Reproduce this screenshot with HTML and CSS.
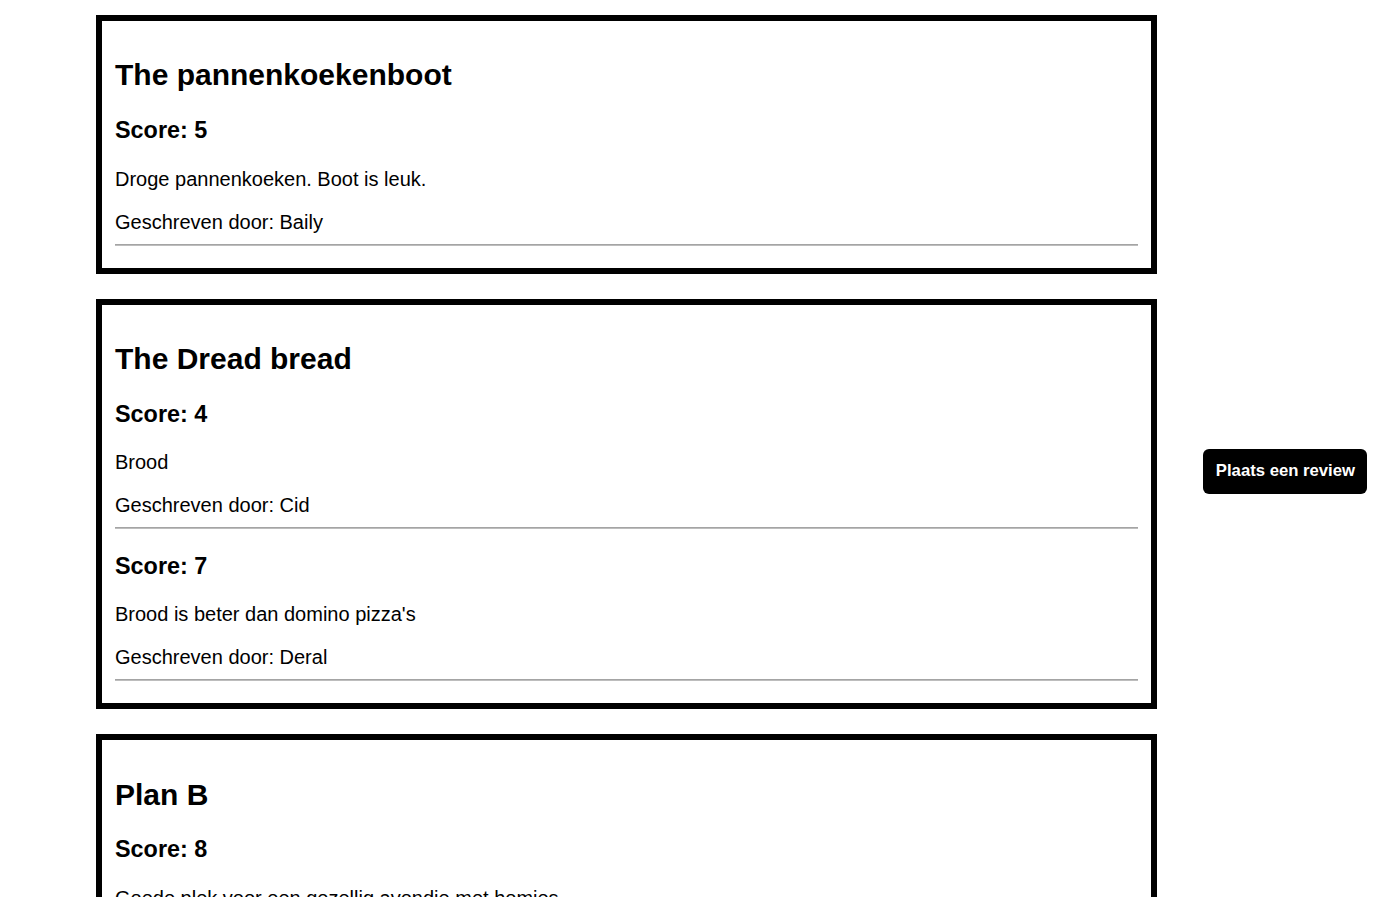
FILE: index.html
```html
<!DOCTYPE html>
<html lang="nl">
<head>
<meta charset="utf-8">
<title>Reviews</title>
<link rel="stylesheet" href="styles.css">
</head>
<body>
<main class="reviews">
  <section class="restaurant">
    <h2 class="restaurant-name">The pannenkoekenboot</h2>
    <article class="review">
      <h3 class="review-score">Score: 5</h3>
      <p class="review-text">Droge pannenkoeken. Boot is leuk.</p>
      <div class="review-author">Geschreven door: Baily</div>
      <hr class="review-sep">
    </article>
  </section>
  <section class="restaurant">
    <h2 class="restaurant-name">The Dread bread</h2>
    <article class="review">
      <h3 class="review-score">Score: 4</h3>
      <p class="review-text">Brood</p>
      <div class="review-author">Geschreven door: Cid</div>
      <hr class="review-sep">
    </article>
    <article class="review">
      <h3 class="review-score">Score: 7</h3>
      <p class="review-text">Brood is beter dan domino pizza's</p>
      <div class="review-author">Geschreven door: Deral</div>
      <hr class="review-sep">
    </article>
  </section>
  <section class="restaurant">
    <h2 class="restaurant-name">Plan B</h2>
    <article class="review">
      <h3 class="review-score">Score: 8</h3>
      <p class="review-text">Goede plek voor een gezellig avondje met homies</p>
      <div class="review-author">Geschreven door: Eva</div>
      <hr class="review-sep">
    </article>
  </section>
</main>
<button class="add-review" type="button">Plaats een review</button>
</body>
</html>
```

FILE: styles.css
```css
html {
  font-size: 20px;
}
body {
  margin: 0;
  font-family: "Liberation Sans", Arial, sans-serif;
  font-size: 20px;
  color: #000;
  background: #fff;
}
.reviews {
  padding: 15px 0 0 96px;
}
.restaurant {
  box-sizing: border-box;
  width: 1061px;
  border: 6px solid #000;
  padding: 12.5px 13px 12px;
  margin-bottom: 25px;
}
.restaurant-name {
  font-size: 30px;
  font-weight: bold;
  margin: 24.9px 0;
}
.review-score {
  font-size: 23.4px;
  font-weight: bold;
  margin: 23.4px 0;
}
.review-text {
  margin: 20px 0;
}
.review-author {
  margin: 0;
}
.review-sep {
  margin: 10px 0;
  height: 0;
  border: none;
  border-top: 1px solid #a4a4a4;
  border-bottom: 1px solid #bdbdbd;
}
.add-review {
  position: fixed;
  top: 449px;
  right: 25px;
  background: #000;
  color: #fff;
  border: none;
  border-radius: 6px;
  font-family: "Liberation Sans", Arial, sans-serif;
  font-weight: bold;
  font-size: 16.7px;
  padding: 12px 12px 14px 13px;
  line-height: 19px;
  cursor: pointer;
}
```
